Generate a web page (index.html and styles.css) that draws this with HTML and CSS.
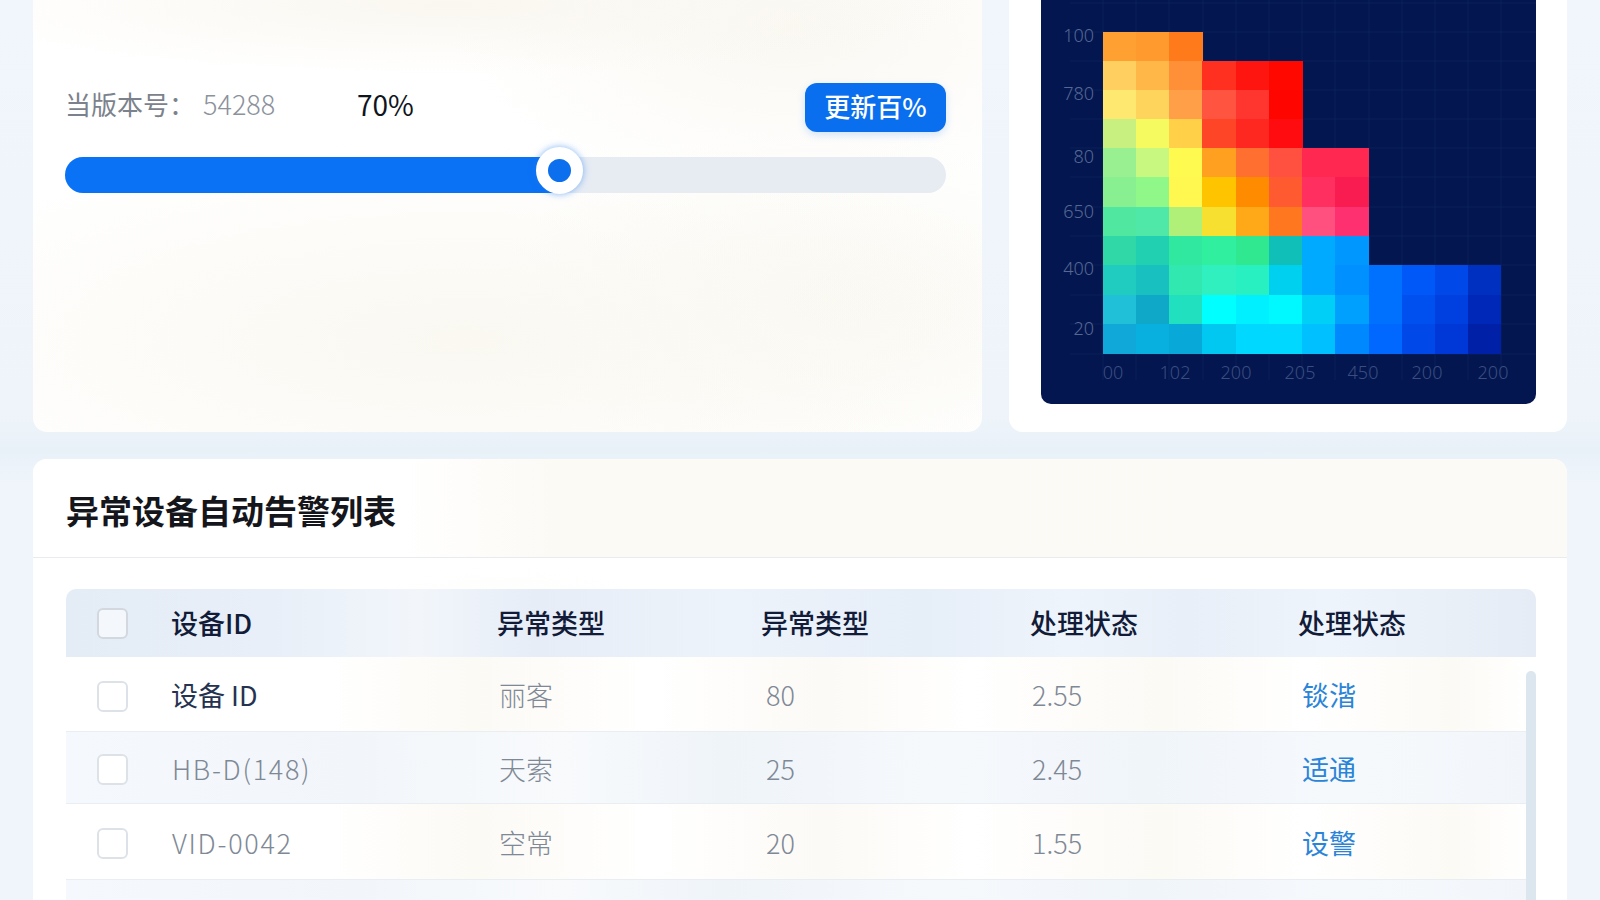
FILE: index.html
```html
<!DOCTYPE html>
<html lang="zh">
<head>
<meta charset="utf-8">
<title>异常设备自动告警列表</title>
<link rel="stylesheet" href="styles.css">
</head>
<body>
<div class="page">
  <div class="top-row">
    <section class="card slider-card">
      <div class="version-row">
        <span class="version-label">当版本号：</span>
        <span class="version-value">54288</span>
        <span class="version-pct">70%</span>
        <button class="update-btn">更新百%</button>
      </div>
      <div class="track">
        <div class="track-fill" style="width:56.5%"></div>
        <div class="knob" style="left:56.1%"></div>
      </div>
    </section>
    <section class="card heat-card">
      <svg class="heat" viewBox="0 0 495 404" width="495" height="404">
        <path class="heat-grid" d="M29 3H495M29 32H495M29 61H495M29 90H495M29 119H495M29 148H495M29 177H495M29 207H495M29 236H495M29 265H495M29 295H495M29 324H495M29 354H495M62 0V380M95 0V380M128 0V380M162 0V380M195 0V380M228 0V380M261 0V380M294 0V380M328 0V380M361 0V380M394 0V380M427 0V380M460 0V380"/>
        <g class="heat-cells">
          <rect x="62" y="32" width="34" height="30" fill="#ffa033"/><rect x="95" y="32" width="34" height="30" fill="#ff9a2e"/><rect x="128" y="32" width="34" height="30" fill="#ff7a1a"/>
          <rect x="62" y="61" width="34" height="30" fill="#ffd060"/><rect x="95" y="61" width="34" height="30" fill="#ffb848"/><rect x="128" y="61" width="34" height="30" fill="#ff9038"/><rect x="161" y="61" width="34" height="30" fill="#ff3020"/><rect x="195" y="61" width="34" height="30" fill="#ff1510"/><rect x="228" y="61" width="34" height="30" fill="#ff0800"/>
          <rect x="62" y="90" width="34" height="30" fill="#ffe870"/><rect x="95" y="90" width="34" height="30" fill="#ffd45c"/><rect x="128" y="90" width="34" height="30" fill="#ffa048"/><rect x="161" y="90" width="34" height="30" fill="#ff5540"/><rect x="195" y="90" width="34" height="30" fill="#ff3530"/><rect x="228" y="90" width="34" height="30" fill="#ff0500"/>
          <rect x="62" y="119" width="34" height="30" fill="#c8f080"/><rect x="95" y="119" width="34" height="30" fill="#f4fa60"/><rect x="128" y="119" width="34" height="30" fill="#ffd048"/><rect x="161" y="119" width="34" height="30" fill="#ff4528"/><rect x="195" y="119" width="34" height="30" fill="#ff2820"/><rect x="228" y="119" width="34" height="30" fill="#ff0c10"/>
          <rect x="62" y="148" width="34" height="30" fill="#98f090"/><rect x="95" y="148" width="34" height="30" fill="#c8f880"/><rect x="128" y="148" width="34" height="30" fill="#fffa50"/><rect x="161" y="148" width="34" height="30" fill="#ffa020"/><rect x="195" y="148" width="34" height="30" fill="#ff7030"/><rect x="228" y="148" width="34" height="30" fill="#ff5040"/><rect x="261" y="148" width="34" height="30" fill="#ff2850"/><rect x="294" y="148" width="34" height="30" fill="#ff2850"/>
          <rect x="62" y="177" width="34" height="30" fill="#88f090"/><rect x="95" y="177" width="34" height="30" fill="#90f888"/><rect x="128" y="177" width="34" height="30" fill="#fff850"/><rect x="161" y="177" width="34" height="30" fill="#ffc400"/><rect x="195" y="177" width="34" height="30" fill="#ff8c00"/><rect x="228" y="177" width="34" height="30" fill="#ff5a30"/><rect x="261" y="177" width="34" height="30" fill="#ff3060"/><rect x="294" y="177" width="34" height="30" fill="#f81c50"/>
          <rect x="62" y="207" width="34" height="30" fill="#50e8a0"/><rect x="95" y="207" width="34" height="30" fill="#50e8a8"/><rect x="128" y="207" width="34" height="30" fill="#b0f078"/><rect x="161" y="207" width="34" height="30" fill="#f8e030"/><rect x="195" y="207" width="34" height="30" fill="#ffa818"/><rect x="228" y="207" width="34" height="30" fill="#ff7820"/><rect x="261" y="207" width="34" height="30" fill="#ff5080"/><rect x="294" y="207" width="34" height="30" fill="#ff3070"/>
          <rect x="62" y="236" width="34" height="30" fill="#30d8a8"/><rect x="95" y="236" width="34" height="30" fill="#20d0b0"/><rect x="128" y="236" width="34" height="30" fill="#30e8a0"/><rect x="161" y="236" width="34" height="30" fill="#30f0a0"/><rect x="195" y="236" width="34" height="30" fill="#30e890"/><rect x="228" y="236" width="34" height="30" fill="#10c0b8"/><rect x="261" y="236" width="34" height="30" fill="#00aaff"/><rect x="294" y="236" width="34" height="30" fill="#0098ff"/>
          <rect x="62" y="265" width="34" height="31" fill="#20ccc0"/><rect x="95" y="265" width="34" height="31" fill="#18c0c0"/><rect x="128" y="265" width="34" height="31" fill="#30e8b0"/><rect x="161" y="265" width="34" height="31" fill="#30f0c0"/><rect x="195" y="265" width="34" height="31" fill="#28f0c0"/><rect x="228" y="265" width="34" height="31" fill="#00d0f0"/><rect x="261" y="265" width="34" height="31" fill="#00aaff"/><rect x="294" y="265" width="34" height="31" fill="#0090ff"/><rect x="328" y="265" width="34" height="31" fill="#0070ff"/><rect x="361" y="265" width="34" height="31" fill="#0058f8"/><rect x="394" y="265" width="34" height="31" fill="#0048e8"/><rect x="427" y="265" width="33" height="31" fill="#0030c0"/>
          <rect x="62" y="295" width="34" height="30" fill="#20c0d8"/><rect x="95" y="295" width="34" height="30" fill="#10a8c8"/><rect x="128" y="295" width="34" height="30" fill="#20e0c0"/><rect x="161" y="295" width="34" height="30" fill="#00ffff"/><rect x="195" y="295" width="34" height="30" fill="#00f0ff"/><rect x="228" y="295" width="34" height="30" fill="#00f8ff"/><rect x="261" y="295" width="34" height="30" fill="#00d0f8"/><rect x="294" y="295" width="34" height="30" fill="#00a0ff"/><rect x="328" y="295" width="34" height="30" fill="#0070ff"/><rect x="361" y="295" width="34" height="30" fill="#0050f0"/><rect x="394" y="295" width="34" height="30" fill="#0040e0"/><rect x="427" y="295" width="33" height="30" fill="#0028b8"/>
          <rect x="62" y="324" width="34" height="30" fill="#10a8d8"/><rect x="95" y="324" width="34" height="30" fill="#08b0e0"/><rect x="128" y="324" width="34" height="30" fill="#08a8d8"/><rect x="161" y="324" width="34" height="30" fill="#00c8f0"/><rect x="195" y="324" width="34" height="30" fill="#00d8ff"/><rect x="228" y="324" width="34" height="30" fill="#00d8ff"/><rect x="261" y="324" width="34" height="30" fill="#00c0ff"/><rect x="294" y="324" width="34" height="30" fill="#0088ff"/><rect x="328" y="324" width="34" height="30" fill="#0068ff"/><rect x="361" y="324" width="34" height="30" fill="#0048e8"/><rect x="394" y="324" width="34" height="30" fill="#0038d8"/><rect x="427" y="324" width="33" height="30" fill="#0020a8"/>
        </g>
        <g class="heat-y">
          <text x="53" y="42">100</text><text x="53" y="100">780</text><text x="53" y="163">80</text><text x="53" y="218">650</text><text x="53" y="275">400</text><text x="53" y="335">20</text>
        </g>
        <g class="heat-x">
          <text x="72" y="379">00</text><text x="134" y="379">102</text><text x="195" y="379">200</text><text x="259" y="379">205</text><text x="322" y="379">450</text><text x="386" y="379">200</text><text x="452" y="379">200</text>
        </g>
      </svg>
    </section>
  </div>

  <section class="card table-card">
    <div class="table-title"><h2>异常设备自动告警列表</h2></div>
    <div class="table-wrap">
      <div class="t-head">
        <span class="check"></span>
        <span class="h-cell">设备ID</span>
        <span class="h-cell">异常类型</span>
        <span class="h-cell">异常类型</span>
        <span class="h-cell">处理状态</span>
        <span class="h-cell">处理状态</span>
      </div>
      <div class="t-body">
        <div class="t-row row-plain">
          <span class="check"></span>
          <span class="c-id c-first">设备 ID</span>
          <span class="c-type">丽客</span>
          <span class="c-num">80</span>
          <span class="c-val">2.55</span>
          <a class="c-link">锬湝</a>
        </div>
        <div class="t-row row-tint">
          <span class="check"></span>
          <span class="c-id">HB-D(148)</span>
          <span class="c-type">天索</span>
          <span class="c-num">25</span>
          <span class="c-val">2.45</span>
          <a class="c-link">适通</a>
        </div>
        <div class="t-row row-plain">
          <span class="check"></span>
          <span class="c-id">VID-0042</span>
          <span class="c-type">空常</span>
          <span class="c-num">20</span>
          <span class="c-val">1.55</span>
          <a class="c-link">设警</a>
        </div>
        <div class="t-row row-tint"></div>
      </div>
      <div class="scrollbar"></div>
    </div>
  </section>
</div>
</body>
</html>
```

FILE: styles.css
```css
* { box-sizing: border-box; }
html, body { margin: 0; height: 900px; overflow: hidden; }
body {
  background: linear-gradient(180deg, #f0f6fc 0%, #eef4fa 46%, #e9f1f8 50%, #eff5fb 54%, #eff5fb 100%);
  font-family: "Noto Sans CJK SC", "Noto Sans", sans-serif;
  color: #101a33;
}
.page {
  height: 900px;
  padding: 0 33px;
  display: flex;
  flex-direction: column;
  gap: 27px;
}
.top-row {
  display: flex;
  gap: 27px;
  height: 432px;
  flex: none;
}
.card { background: #fff; }

/* Slider card */
.slider-card {
  width: 949px;
  flex: none;
  padding: 83px 36px 0 32px;
  border-radius: 0 0 14px 14px;
  background:
    radial-gradient(ellipse 520px 70px at 420px 5px, #faf7f0 0%, rgba(250,247,240,0) 100%),
    radial-gradient(ellipse 340px 170px at 760px 30px, #faf8f2 0%, rgba(250,248,242,0) 100%),
    radial-gradient(ellipse 640px 200px at 430px 340px, #faf8f1 0%, rgba(250,248,241,0) 100%),
    radial-gradient(ellipse 340px 170px at 800px 300px, #faf9f3 0%, rgba(250,249,243,0) 100%),
    #fff;
}
.version-row {
  display: flex;
  align-items: center;
  height: 49px;
  margin-bottom: 25px;
}
.version-label {
  font-size: 26px;
  color: #7c828b;
  width: 138px;
  flex: none;
  padding-bottom: 8px;
}
.version-value {
  font-size: 27px;
  font-weight: 300;
  color: #8b929b;
  width: 154px;
  flex: none;
  padding-bottom: 8px;
}
.version-pct {
  font-size: 28px;
  color: #10141d;
  padding-bottom: 8px;
}
.update-btn {
  margin-left: auto;
  width: 141px;
  height: 49px;
  border: 0;
  border-radius: 12px;
  background: #0a6fee;
  color: #fff;
  font-family: inherit;
  font-size: 26px;
  font-weight: 500;
  padding: 0 0 4px;
  box-shadow: 0 3px 8px rgba(10, 111, 238, .18);
}
.track {
  position: relative;
  height: 36px;
  border-radius: 18px;
  background: #e7ecf3;
}
.track-fill {
  height: 100%;
  border-radius: 18px 0 0 18px;
  background: #0a72f4;
}
.knob {
  position: absolute;
  top: -10px;
  width: 47px;
  height: 47px;
  margin-left: -23.5px;
  border-radius: 50%;
  background: #0b6fee;
  border: 12px solid #fff;
  box-shadow: 0 0 7px rgba(30, 120, 240, .55);
}

/* Heat map card */
.heat-card {
  flex: 1;
  padding: 0 31px 0 32px;
  border-radius: 0 0 14px 14px;
}
.heat {
  display: block;
  background: #03164f;
  border-radius: 0 0 10px 10px;
}
.heat-grid { stroke: rgba(120, 160, 230, .07); stroke-width: 1; fill: none; }
.heat-cells rect { shape-rendering: crispEdges; }
.heat-y text, .heat-x text {
  font-family: "Noto Sans", sans-serif;
  font-size: 18px;
  font-weight: 300;
}
.heat-y text { fill: #566892; text-anchor: end; }
.heat-x text { fill: #3a4d80; text-anchor: middle; }

/* Table card */
.table-card {
  flex: 1;
  min-height: 0;
  overflow: hidden;
  border-radius: 14px 14px 0 0;
  background:
    radial-gradient(ellipse 240px 160px at 470px 260px, #fcfaf6 0%, rgba(252,250,246,0) 100%),
    #fff;
}
.table-title {
  height: 99px;
  padding-left: 33px;
  display: flex;
  align-items: center;
  border-bottom: 1px solid #e8ecf0;
  background: linear-gradient(90deg, #fff 0%, #fff 24%, #fcfaf5 34%, #fcfaf6 100%);
}
.table-title h2 {
  margin: 0;
  font-size: 33px;
  font-weight: 700;
  color: #14161c;
  padding-top: 4px;
}
.table-wrap {
  position: relative;
  margin: 31px 31px 0 33px;
}
.t-head, .t-row {
  display: grid;
  grid-template-columns: 74px 326px 264px 269px 268px 1fr;
  align-items: center;
  padding-left: 31px;
}
.t-head {
  height: 68px;
  border-radius: 10px 10px 0 0;
  font-size: 27px;
  font-weight: 500;
  color: #121b38;
  background: linear-gradient(90deg, #e4ecf6 0%, #e8eff8 14%, #f2f6fb 24%, #e6edf7 32%, #edf3fa 45%, #e6eef8 58%, #eef4fb 68%, #e8eff8 76%, #eef4fb 86%, #e5ecf5 100%);
}
.h-cell { padding-bottom: 2px; }
.t-head .check { background: #f4f7fb; border-color: #d3d8df; }
.check {
  display: block;
  width: 31px;
  height: 31px;
  border: 2px solid #dde2e8;
  border-radius: 6px;
  background: #fff;
}
.t-body {
  margin-right: 10px;
  display: grid;
  grid-template-rows: 75px 72px 76px 40px;
}
.t-row {
  padding-top: 4px;
  border-bottom: 1px solid #e9eef3;
  font-size: 27px;
  font-weight: 300;
}
.row-plain {
  background: linear-gradient(90deg, #fff 0%, #fff 18%, #fcfaf5 28%, #fff 40%, #fcfaf6 52%, #fff 62%, #fcfaf5 75%, #fff 85%, #fcfaf5 95%, #fff 100%);
}
.row-tint {
  background: linear-gradient(90deg, #f5f9fd 0%, #f2f6fa 20%, #f8fafc 34%, #eff4f9 45%, #f6f9fc 60%, #f0f5fa 74%, #f6f9fc 88%, #f2f6fa 100%);
}
.c-id, .c-type, .c-num, .c-val, .c-link { padding-bottom: 3px; }
.c-id { color: #7f8996; padding-left: 1px; letter-spacing: 1.7px; white-space: nowrap; }
.c-first { color: #263350; padding-left: 0; letter-spacing: 0; font-weight: 400; }
.c-type { color: #7f8996; padding-left: 2px; }
.c-num { color: #7f8996; padding-left: 5px; }
.c-val { color: #7f8996; padding-left: 2px; }
.c-link { color: #2a84d8; padding-left: 4px; font-weight: 400; }
.scrollbar {
  position: absolute;
  right: 0;
  top: 82px;
  width: 10px;
  height: 300px;
  border-radius: 5px;
  background: #dce6ee;
}
```
